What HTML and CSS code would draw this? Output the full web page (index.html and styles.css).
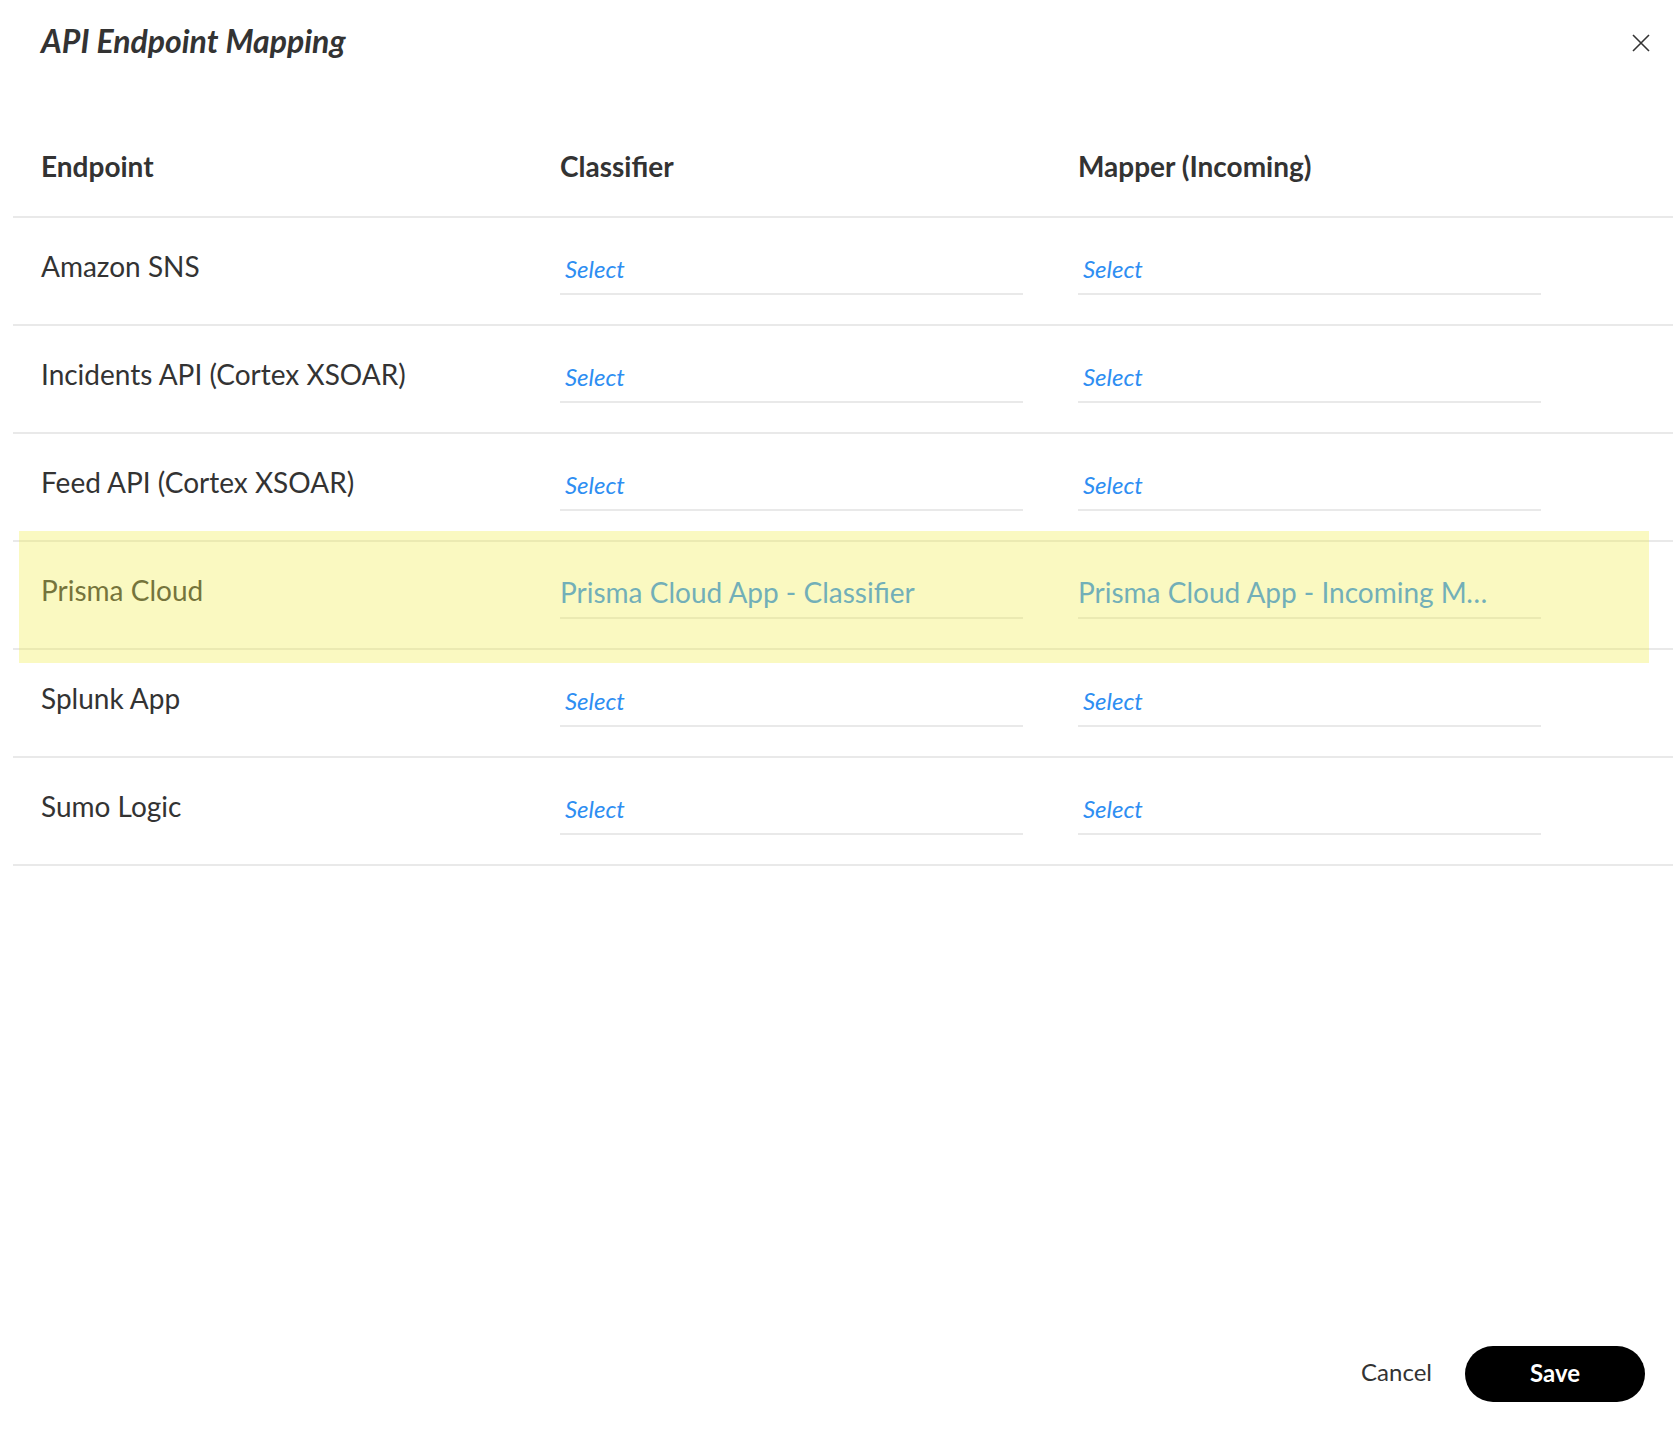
FILE: index.html
```html
<!DOCTYPE html>
<html lang="en">
<head>
<meta charset="utf-8">
<title>API Endpoint Mapping</title>
<link rel="stylesheet" href="styles.css">
</head>
<body>
<div class="modal">
  <div class="modal-head">
    <h1 class="title">API Endpoint Mapping</h1>
    <button class="close" aria-label="Close">
      <svg width="18" height="18" viewBox="0 0 18 18"><path d="M1 1L17 17M17 1L1 17" stroke="#333" stroke-width="1.6" fill="none"/></svg>
    </button>
  </div>

  <div class="table">
    <div class="row head">
      <div class="cell">Endpoint</div>
      <div class="cell">Classifier</div>
      <div class="cell">Mapper (Incoming)</div>
    </div>
    <div class="row">
      <div class="cell name">Amazon SNS</div>
      <div class="cell"><div class="field placeholder">Select</div></div>
      <div class="cell"><div class="field placeholder">Select</div></div>
    </div>
    <div class="row">
      <div class="cell name">Incidents API (Cortex XSOAR)</div>
      <div class="cell"><div class="field placeholder">Select</div></div>
      <div class="cell"><div class="field placeholder">Select</div></div>
    </div>
    <div class="row">
      <div class="cell name">Feed API (Cortex XSOAR)</div>
      <div class="cell"><div class="field placeholder">Select</div></div>
      <div class="cell"><div class="field placeholder">Select</div></div>
    </div>
    <div class="row highlighted">
      <div class="cell name">Prisma Cloud</div>
      <div class="cell"><div class="field value">Prisma Cloud App - Classifier</div></div>
      <div class="cell"><div class="field value">Prisma Cloud App - Incoming Mapper</div></div>
    </div>
    <div class="row">
      <div class="cell name">Splunk App</div>
      <div class="cell"><div class="field placeholder">Select</div></div>
      <div class="cell"><div class="field placeholder">Select</div></div>
    </div>
    <div class="row">
      <div class="cell name">Sumo Logic</div>
      <div class="cell"><div class="field placeholder">Select</div></div>
      <div class="cell"><div class="field placeholder">Select</div></div>
    </div>
  </div>

  <div class="modal-foot">
    <button class="btn-cancel">Cancel</button>
    <button class="btn-save">Save</button>
  </div>
</div>
</body>
</html>
```

FILE: styles.css
```css
* { box-sizing: border-box; }
html, body { margin: 0; padding: 0; background: #fff; }
body {
  font-family: "Lato", "Noto Sans", sans-serif;
  color: #333;
}
.modal {
  min-height: 1446px;
  display: flex;
  flex-direction: column;
}
.modal-head {
  display: flex;
  justify-content: space-between;
  align-items: center;
  padding: 22px 29px 0 41px;
  height: 59px;
}
.title {
  margin: 0;
  font-size: 32px;
  line-height: 38px;
  font-style: italic;
  font-weight: 700;
  color: #333;
}
.close {
  border: 0;
  background: none;
  padding: 0;
  width: 18px;
  height: 18px;
  margin-top: 4px;
  display: flex;
}
.table {
  margin: 0 6px 0 13px;
}
.row {
  display: grid;
  grid-template-columns: 519px 518px 518px;
  padding-left: 28px;
  border-bottom: 2px solid #e9e9e9;
  height: 108px;
  padding-top: 29px;
}
.row.head {
  height: 159px;
  padding-top: 90px;
  font-weight: 700;
  font-size: 28px;
  line-height: 34px;
}
.name {
  font-size: 28px;
  line-height: 38px;
}
.field {
  width: 463px;
  height: 48px;
  border-bottom: 2px solid #e9e9e9;
  white-space: nowrap;
  overflow: hidden;
  text-overflow: ellipsis;
}
.placeholder {
  font-style: italic;
  font-size: 24px;
  line-height: 43px;
  padding-left: 5px;
  color: #2e8ef2;
}
.value {
  font-size: 28px;
  line-height: 42px;
  padding-right: 48px;
  color: #2e8ef2;
}
.highlighted { position: relative; }
.highlighted::after {
  content: "";
  position: absolute;
  top: -11px;
  bottom: -15px;
  left: 6px;
  right: 24px;
  background: rgba(241, 238, 76, 0.35);
  pointer-events: none;
}
.modal-foot {
  margin-top: auto;
  display: flex;
  justify-content: flex-end;
  align-items: center;
  gap: 33px;
  padding: 0 34px 44px 0;
}
.btn-cancel {
  border: 0;
  background: none;
  font-family: inherit;
  font-size: 24px;
  color: #333;
  padding: 0 0 6px;
}
.btn-save {
  border: 0;
  background: #000;
  color: #fff;
  font-family: inherit;
  font-weight: 700;
  font-size: 24px;
  width: 180px;
  height: 56px;
  padding: 0 0 3px;
  border-radius: 28px;
}
```
